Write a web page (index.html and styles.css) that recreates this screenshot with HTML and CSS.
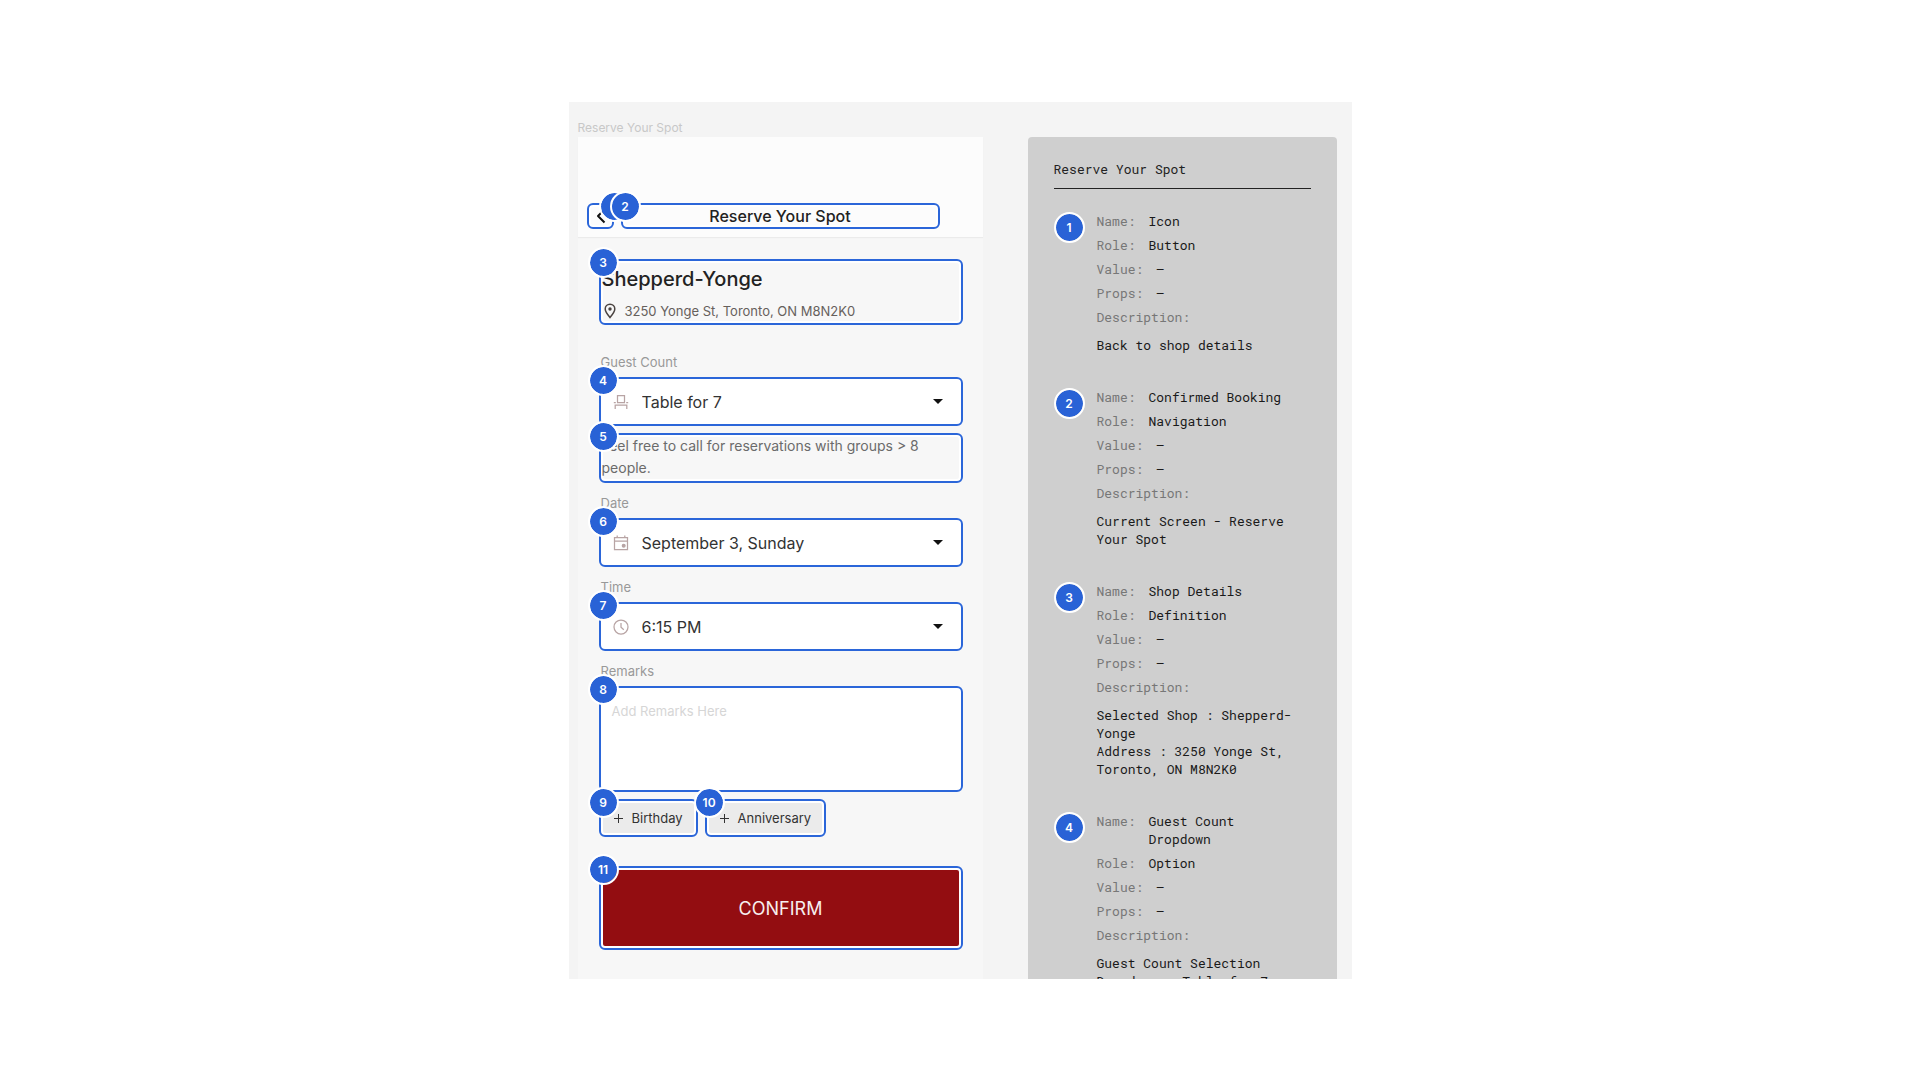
FILE: index.html
```html
<!DOCTYPE html>
<html lang="en">
<head>
    <meta charset="UTF-8">
    <meta name="viewport" content="width=device-width, initial-scale=1.0">
    <title>Reserve Your Spot</title>
    <link rel="stylesheet" href="styles.css">
</head>
<body>
    <div class="board">
        <p class="frame-label">Reserve Your Spot</p>

        <!-- Reservation screen -->
        <main class="phone">
            <header class="top-bar">
                <div class="mark mark-back">
                    <button class="back" type="button" aria-label="Back">
                        <svg width="20" height="20" viewBox="0 0 20 20" fill="none" stroke="#111" stroke-width="2" stroke-linejoin="round"><path d="M14.5 3.5 L8 10 L14.5 16.5"/></svg>
                    </button>
                    <span class="badge badge-right">1</span>
                </div>
                <div class="mark mark-title">
                    <h1>Reserve Your Spot</h1>
                    <span class="badge">2</span>
                </div>
            </header>

            <form class="form">
                <section class="mark shop">
                    <h2>Shepperd-Yonge</h2>
                    <p class="address">
                        <svg width="12" height="16" viewBox="0 0 12 16" fill="none" stroke="#4a4340" stroke-width="1.5"><path d="M6 14.5 C3 11 1.2 8.6 1.2 6 a4.8 4.8 0 0 1 9.6 0 C10.8 8.6 9 11 6 14.5 Z"/><circle cx="6" cy="6" r="1.7" fill="#4a4340" stroke="none"/></svg>
                        3250 Yonge St, Toronto, ON M8N2K0
                    </p>
                    <span class="badge">3</span>
                </section>

                <div class="group group-first">
                    <label for="guests">Guest Count</label>
                    <div class="mark field">
                        <svg class="icon" width="16" height="16" viewBox="0 0 16 16"><path d="M4.5 8.5 V1.5 h7 V8.5 M2.2 15 V11.2 h11.6 V15 M0.8 8.5 h2 M4 8.5 h8 M13.2 8.5 h2"/></svg>
                        <select id="guests">
                            <option>Table for 7</option>
                        </select>
                        <svg class="arrow" width="10" height="5" viewBox="0 0 10 5"><path d="M0 0 H10 L5 5 Z"/></svg>
                        <span class="badge">4</span>
                    </div>
                    <p class="mark hint">Feel free to call for reservations with groups &gt; 8 people.<span class="badge">5</span></p>
                </div>

                <div class="group">
                    <label for="date">Date</label>
                    <div class="mark field">
                        <svg class="icon" width="16" height="16" viewBox="0 0 16 16"><path d="M1.5 2.5 h13 v12 h-13 Z M1.5 6 h13 M4.2 0.5 v2 M11.8 0.5 v2"/><circle cx="10.7" cy="10.7" r="1.4" fill="#b8a4a4"/></svg>
                        <select id="date">
                            <option>September 3, Sunday</option>
                        </select>
                        <svg class="arrow" width="10" height="5" viewBox="0 0 10 5"><path d="M0 0 H10 L5 5 Z"/></svg>
                        <span class="badge">6</span>
                    </div>
                </div>

                <div class="group">
                    <label for="time">Time</label>
                    <div class="mark field">
                        <svg class="icon" width="16" height="16" viewBox="0 0 16 16"><circle cx="8" cy="8" r="7"/><path d="M8 4 V8.2 L10.8 10.8"/></svg>
                        <select id="time">
                            <option>6:15 PM</option>
                        </select>
                        <svg class="arrow" width="10" height="5" viewBox="0 0 10 5"><path d="M0 0 H10 L5 5 Z"/></svg>
                        <span class="badge">7</span>
                    </div>
                </div>

                <div class="group">
                    <label for="remarks">Remarks</label>
                    <div class="mark remarks">
                        <textarea id="remarks" placeholder="Add Remarks Here"></textarea>
                        <span class="badge">8</span>
                    </div>
                </div>

                <div class="chips">
                    <div class="mark">
                        <button class="chip" type="button">
                            <svg width="9" height="9" viewBox="0 0 9 9" stroke="#333" stroke-width="1"><path d="M0 4.5 H9 M4.5 0 V9"/></svg>
                            Birthday
                        </button>
                        <span class="badge">9</span>
                    </div>
                    <div class="mark">
                        <button class="chip" type="button">
                            <svg width="9" height="9" viewBox="0 0 9 9" stroke="#333" stroke-width="1"><path d="M0 4.5 H9 M4.5 0 V9"/></svg>
                            Anniversary
                        </button>
                        <span class="badge">10</span>
                    </div>
                </div>

                <div class="mark mark-confirm">
                    <button class="confirm" type="button">CONFIRM</button>
                    <span class="badge">11</span>
                </div>
            </form>
        </main>

        <!-- Accessibility notes -->
        <aside class="notes">
            <h2>Reserve Your Spot</h2>

            <article class="note">
                <span class="badge">1</span>
                <dl>
                    <div><dt>Name:</dt><dd>Icon</dd></div>
                    <div><dt>Role:</dt><dd>Button</dd></div>
                    <div><dt>Value:</dt><dd>–</dd></div>
                    <div><dt>Props:</dt><dd>–</dd></div>
                    <div class="description"><dt>Description:</dt><dd>Back to shop details</dd></div>
                </dl>
            </article>

            <article class="note">
                <span class="badge">2</span>
                <dl>
                    <div><dt>Name:</dt><dd>Confirmed Booking</dd></div>
                    <div><dt>Role:</dt><dd>Navigation</dd></div>
                    <div><dt>Value:</dt><dd>–</dd></div>
                    <div><dt>Props:</dt><dd>–</dd></div>
                    <div class="description"><dt>Description:</dt><dd>Current Screen - Reserve Your Spot</dd></div>
                </dl>
            </article>

            <article class="note">
                <span class="badge">3</span>
                <dl>
                    <div><dt>Name:</dt><dd>Shop Details</dd></div>
                    <div><dt>Role:</dt><dd>Definition</dd></div>
                    <div><dt>Value:</dt><dd>–</dd></div>
                    <div><dt>Props:</dt><dd>–</dd></div>
                    <div class="description"><dt>Description:</dt><dd>Selected Shop : Shepperd-Yonge<br>Address : 3250 Yonge St, Toronto, ON M8N2K0</dd></div>
                </dl>
            </article>

            <article class="note">
                <span class="badge">4</span>
                <dl>
                    <div><dt>Name:</dt><dd>Guest Count Dropdown</dd></div>
                    <div><dt>Role:</dt><dd>Option</dd></div>
                    <div><dt>Value:</dt><dd>–</dd></div>
                    <div><dt>Props:</dt><dd>–</dd></div>
                    <div class="description"><dt>Description:</dt><dd>Guest Count Selection Dropdown : Table for 7</dd></div>
                </dl>
            </article>
        </aside>
    </div>
</body>
</html>
```

FILE: styles.css
```css
/* General Styling */
* {
    box-sizing: border-box;
    margin: 0;
    padding: 0;
}
body {
    display: flex;
    justify-content: center;
    height: 100vh;
    padding: 102px 16px 101px;
    background: white;
    color: #222;
    font-family: Inter, sans-serif;
}
button, select, textarea {
    border: none;
    background: none;
    color: inherit;
    font-family: inherit;
}
button {
    cursor: pointer;
}
.board {
    display: grid;
    grid-template-columns: minmax(0, 405fr) minmax(0, 309fr);
    grid-template-rows: auto 1fr;
    column-gap: 45px;
    width: 100%;
    max-width: 783px;
    padding: 0 15px 0 9px;
    background: #f4f4f4;
    overflow: hidden;
}
.frame-label {
    grid-column: 1 / -1;
    padding: 18px 0 1px;
    color: #c8c8c8;
    font-size: 12px;
    line-height: 16px;
}

/* Blue outline with a numbered badge on its corner */
.mark {
    position: relative;
    border: 2px solid #2b66d9;
    border-radius: 6px;
    box-shadow: inset 0 0 0 2px white;
}
.badge {
    display: flex;
    align-items: center;
    justify-content: center;
    flex: none;
    width: 31px;
    height: 31px;
    border: 2px solid white;
    border-radius: 50%;
    background: #2962d6;
    background-clip: padding-box;
    color: white;
    font-size: 12px;
    font-weight: 600;
    line-height: 16px;
}
.mark .badge {
    position: absolute;
    top: -14px;
    left: -13px;
    z-index: 1;
}
.mark .badge-right {
    left: 10px;
}

/* Reservation screen */
.phone {
    background: #f7f7f7;
}
.top-bar {
    display: flex;
    align-items: flex-end;
    gap: 7px;
    height: 100px;
    padding: 0 43px 8px 9px;
    background: #fcfcfc;
    box-shadow: 0 1px 1px #ebebeb;
}
.mark-back {
    width: 27px;
}
.back {
    display: block;
    width: 100%;
    height: 22px;
}
.back svg {
    display: block;
    margin: 0 auto;
}
.mark-title {
    flex: 1;
}
.mark-title h1 {
    font-size: 16px;
    font-weight: 500;
    line-height: 22px;
    text-align: center;
}
.form {
    padding: 22px 20px 30px 21px;
}
.shop {
    padding: 4px 1px 2px;
}
.shop h2 {
    font-size: 20px;
    font-weight: 500;
    line-height: 28px;
}
.address {
    display: flex;
    align-items: center;
    gap: 9px;
    padding: 8px 0 0 2px;
    color: #66605c;
    font-size: 13px;
    line-height: 20px;
}
.group {
    padding-top: 12px;
}
.group-first {
    padding-top: 29px;
}
.group label {
    display: block;
    padding: 0 2px;
    margin-bottom: 7px;
    color: #999;
    font-size: 13px;
    line-height: 16px;
}
.field {
    display: flex;
    align-items: center;
    height: 49px;
    padding: 0 18px 0 12px;
    background: white;
}
.icon {
    flex: none;
    fill: none;
    stroke: #b8a4a4;
    stroke-width: 1.25;
}
.field select {
    flex: 1;
    min-width: 0;
    height: 100%;
    padding-left: 13px;
    appearance: none;
    color: #333;
    font-size: 16px;
}
.arrow {
    flex: none;
    fill: #111;
}
.hint {
    margin-top: 7px;
    padding: 0 1px 2px;
    color: #6b6b6b;
    font-size: 14px;
    line-height: 22px;
}
.remarks {
    height: 106px;
    background: white;
}
.remarks textarea {
    display: block;
    width: 100%;
    height: 100%;
    padding: 13px 11px;
    font-size: 13px;
    line-height: 20px;
    resize: none;
}
.remarks textarea::placeholder {
    color: #d6d6d6;
}
.chips {
    display: flex;
    gap: 7px;
    padding: 7px 0 29px;
}
.chip {
    display: flex;
    align-items: center;
    gap: 9px;
    height: 34px;
    padding: 0 13px;
    color: #333;
    font-size: 13px;
}
.chips .mark {
    background: #ebebeb;
}
.mark-confirm {
    padding: 2px;
    background: white;
}
.confirm {
    display: block;
    width: 100%;
    height: 76px;
    border-radius: 2px;
    background: #930d11;
    color: #f7eeee;
    font-size: 18px;
}

/* Accessibility notes */
.notes {
    padding: 23px 26px;
    border-radius: 4px;
    background: #cfcfcf;
    font-family: "Roboto Mono", "DejaVu Sans Mono", monospace;
    font-size: 13px;
    line-height: 18px;
}
.notes h2 {
    padding-bottom: 10px;
    border-bottom: 1px solid #222;
    font-size: 13px;
    font-weight: 400;
}
.note {
    display: flex;
    gap: 12px;
    margin-top: 23px;
    padding-right: 14px;
}
.note + .note {
    margin-top: 34px;
}
.note .badge {
    font-family: Inter, sans-serif;
}
.note dl {
    display: flex;
    flex-direction: column;
    gap: 6px;
    min-width: 0;
}
.note dl div {
    display: flex;
    gap: 13px;
}
.note dl .description {
    flex-direction: column;
    gap: 10px;
}
.note dt {
    color: #777;
}
.note dd {
    color: #1a1a1a;
}
```
